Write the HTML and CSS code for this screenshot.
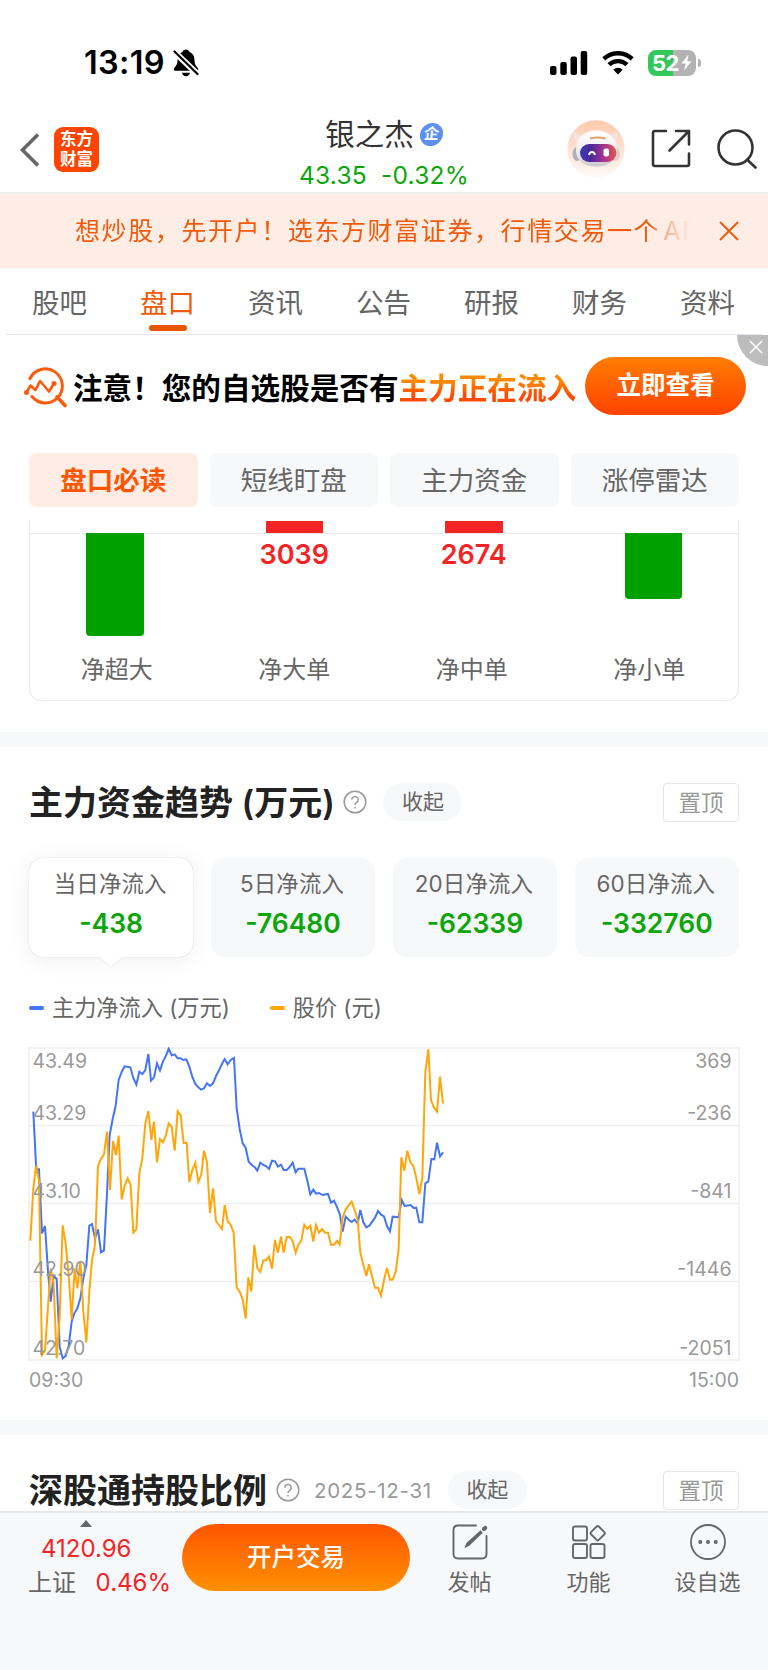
FILE: index.html
```
<!DOCTYPE html>
<html lang="zh-CN">
<head>
  <meta charset="UTF-8" />
  <meta name="viewport" content="width=device-width, initial-scale=1" />
  <title>银之杰</title>
  <link rel="stylesheet" href="styles.css">
</head>
<body>

<div class="status-bar">
  <div class="status-left">
    <span class="clock">13:19</span>
    <svg width="26" height="28" viewBox="0 0 26 28">
      <path d="M13 0.5c-1.8 0-3 1-3.3 2.2C6.600 4 4.800 6.500 4.600 10c-.2 4.500-.8 6-2.600 8-1.500 1.800-1.800 3.700.2 3.700h21.600c2 0 1.700-1.900.2-3.700-1.800-2-2.400-3.500-2.600-8-.2-3.500-2-6-5.100-7.300C16 1.500 14.800.5 13 .5z"/>
      <path d="M9 23.700h8c-.4 2.200-2 3.600-4 3.600s-3.600-1.400-4-3.600z"/>
      <path d="M1 2.500l24 23" stroke="#fff" stroke-width="6"/>
      <path d="M1.500 2.500l23 22.500" stroke="#000" stroke-width="2.200" stroke-linecap="round"/>
    </svg>
  </div>
  <div class="status-right">
    <svg width="38" height="24" viewBox="0 0 38 24">
      <rect x="0" y="15" width="6.500" height="9" rx="2"/>
      <rect x="10.300" y="11" width="6.500" height="13" rx="2"/>
      <rect x="20.500" y="5.500" width="6.500" height="18.500" rx="2"/>
      <rect x="30.700" y="0" width="6.500" height="24" rx="2"/>
    </svg>
    <svg width="32" height="24" viewBox="0 0 32 24" fill="none" stroke="#000" stroke-width="4.400">
      <path d="M1.800 7.900a20.500 20.500 0 0 1 28.400 0"/>
      <path d="M7 13.700a13 13 0 0 1 18 0"/>
      <path d="M16 23.500l-4.700-4.700a6.700 6.700 0 0 1 9.400 0z" fill="#000" stroke="none"/>
    </svg>
    <div class="battery">
      <span>52</span>
      <svg width="11" height="17" viewBox="0 0 11 17"><path d="M7.500.5L.5 9.500h4.200L3.200 16.500l7.300-9.300H6.300z" fill="#fff"/></svg>
    </div>
    <i class="battery-tip"></i>
  </div>
</div>

<header class="header">
  <div class="header-left">
    <svg width="20" height="34" viewBox="0 0 20 34" fill="none" stroke="#666" stroke-width="3.600"><path d="M18 1.500L2.500 17 18 32.500"/></svg>
    <div class="logo"><span>东方</span><span>财富</span></div>
  </div>
  <div class="header-title">
    <div class="stock-name">银之杰<span class="badge">企</span></div>
    <div class="stock-price"><span>43.35</span><span>-0.32%</span></div>
  </div>
  <div class="header-right">
    <svg width="58" height="58" viewBox="0 0 58 58">
      <defs>
        <linearGradient id="halo" x1="0" y1="0" x2="0" y2="1"><stop offset="0" stop-color="#ffc9ae"/><stop offset="1" stop-color="#fffaf7"/></linearGradient>
        <linearGradient id="visor"><stop offset="0" stop-color="#3f3ab5"/><stop offset=".3" stop-color="#4b2a9a"/><stop offset=".65" stop-color="#a8348f"/><stop offset="1" stop-color="#e2564f"/></linearGradient>
        <linearGradient id="shell" x1="0" y1="0" x2="0" y2="1"><stop offset="0" stop-color="#fff"/><stop offset=".7" stop-color="#ece9ea"/><stop offset="1" stop-color="#c9c4c8"/></linearGradient>
      </defs>
      <circle cx="29" cy="29" r="28.700" fill="url(#halo)"/>
      <path d="M7.500 11c-2 4-1 8.500 3 10.500l6-5.500c-4 .5-7.500-1-9-5z" fill="#efe6e4"/>
      <path d="M49 11c2 4 1 8.500-3 10.500L40 16c4 .5 7.500-1 9-5z" fill="#efe6e4"/>
      <ellipse cx="10" cy="34" rx="4.500" ry="7" fill="#aeb0bb"/>
      <ellipse cx="48.500" cy="34" rx="4.500" ry="7" fill="#d9cdd0"/>
      <path d="M29 10.500c-13 0-20 8-20 19.500C9 41 17 46.500 29 46.500S50 41 50 30c0-11.500-8-19.500-21-19.500z" fill="url(#shell)"/>
      <path d="M23 18.500q7.500-2 15.500 0" stroke="#e9a06a" stroke-width="2" fill="none"/>
      <rect x="13" y="24" width="36.500" height="18" rx="9" fill="url(#visor)"/>
      <path d="M22 35c.8-4 5.200-4 6 0" stroke="#fff" stroke-width="2" fill="none"/>
      <rect x="36.500" y="28.500" width="5.500" height="8" rx="2" fill="#fff"/>
    </svg>
    <svg width="40" height="40" viewBox="0 0 40 40" fill="none" stroke="#333" stroke-width="2.600" stroke-linecap="round" stroke-linejoin="round">
      <path d="M15 2H4Q2 2 2 4v31q0 2 2 2h32q2 0 2-2V24.500"/>
      <path d="M25 2h13v13.500M38 2L18.500 21.500"/>
    </svg>
    <svg width="40" height="40" viewBox="0 0 40 40" fill="none" stroke="#333" stroke-width="2.600" stroke-linecap="round">
      <circle cx="18.500" cy="18.500" r="17"/><path d="M30.500 31l8 7.500"/>
    </svg>
  </div>
</header>

<div class="notice">
  <p class="notice-text">想炒股，先开户！选东方财富证券，行情交易一个<span>APP</span></p>
  <svg width="20" height="20" viewBox="0 0 20 20" fill="none" stroke="#f05a0a" stroke-width="1.900"><path d="M1 1l18 18M19 1L1 19"/></svg>
</div>

<nav class="tabs">
  <a>股吧</a>
  <a class="active">盘口</a>
  <a>资讯</a>
  <a>公告</a>
  <a>研报</a>
  <a>财务</a>
  <a>资料</a>
</nav>

<div class="promo">
  <svg width="44" height="42" viewBox="0 0 44 42" fill="none" stroke="#ff5a0c" stroke-width="3" stroke-linecap="round" stroke-linejoin="round">
    <path d="M6 12.500A17 17 0 1 1 8 30.500"/>
    <path d="M33 31l8 8.500" stroke-width="3.600"/>
    <path d="M2.500 26.500L6.500 19.500 11.500 24 16 15 25 25.500 30 17.500" stroke-width="2.600"/>
    <circle cx="2.500" cy="26.500" r="1" /><circle cx="30" cy="17.500" r="1"/>
  </svg>
  <p class="promo-text">注意！您的自选股是否有<em>主力正在流入</em></p>
  <a class="promo-btn">立即查看</a>
  <span class="promo-close">
    <svg width="14" height="14" viewBox="0 0 14 14" stroke="#fff" stroke-width="1.600"><path d="M1 1l12 12M13 1L1 13"/></svg>
  </span>
</div>

<div class="pills">
  <a class="active">盘口必读</a>
  <a>短线盯盘</a>
  <a>主力资金</a>
  <a>涨停雷达</a>
</div>

<section class="flow">
  <div class="flow-top"><i></i><i class="up"></i><i class="up"></i><i></i></div>
  <div class="flow-bars">
    <div><i class="down" style="height: 103px"></i></div>
    <div><b>3039</b></div>
    <div><b>2674</b></div>
    <div><i class="down" style="height: 66px"></i></div>
  </div>
  <div class="flow-labels"><span>净超大</span><span>净大单</span><span>净中单</span><span>净小单</span></div>
</section>

<section class="block trend">
  <div class="block-head">
    <h2>主力资金趋势 (万元)</h2>
    <svg class="help" width="24" height="24" viewBox="0 0 24 24"><circle cx="12" cy="12" r="10.800"/><path d="M8.800 9.700a3.200 3.200 0 1 1 5 2.600c-1.300.9-1.800 1.400-1.800 2.700"/><path d="M12 17v1.500"/></svg>
    <span class="fold">收起</span>
    <span class="pin">置顶</span>
  </div>

  <div class="cards">
    <div class="card active"><span>当日净流入</span><b>-438</b></div>
    <div class="card"><span>5日净流入</span><b>-76480</b></div>
    <div class="card"><span>20日净流入</span><b>-62339</b></div>
    <div class="card"><span>60日净流入</span><b>-332760</b></div>
  </div>

  <div class="legend">
    <span class="blue">主力净流入 (万元)</span>
    <span class="orange">股价 (元)</span>
  </div>

  <svg class="chart" width="712" height="314" viewBox="-1 -1 712 314">
    <g class="grid">
      <path d="M0 0H710V312H0zM0 77.500H710M0 155.500H710M0 233.500H710"/>
    </g>
    <g transform="scale(.33333) translate(-27 -54)">
      <polyline class="line-blue" points="40,245 48,404 50,418 57,418 66,610 75,588 84,725 92,815 101,738 110,747 119,950 128,985 137,978 146,948 155,875 163,850 172,835 181,805 190,745 199,705 208,587 216,582 225,625 234,598 243,667 252,661 261,490 269,315 278,267 287,227 296,150 305,126 314,109 331,112 340,144 349,164 358,125 367,132 376,120 385,72 393,152 402,142 411,100 420,121 429,94 438,77 446,56 455,76 464,73 473,85 482,85 490,90 499,88 508,110 517,141 526,162 535,172 543,179 552,175 561,160 570,168 579,160 588,138 597,121 606,102 614,87 623,103 632,90 642,84 650,235 659,297 668,340 677,353 686,395 695,405 703,410 712,422 721,398 730,405 739,409 747,417 756,392 765,394 774,410 783,404 791,420 800,420 809,411 818,398 827,427 835,416 853,416 862,452 871,493 880,479 888,491 897,489 907,495 924,492 933,518 942,512 951,531 960,555 968,605 977,560 986,569 995,576 1004,569 1013,580 1021,540 1030,577 1039,592 1048,587 1065,563 1074,543 1083,554 1092,559 1101,588 1110,604 1118,560 1136,562 1145,510 1154,528 1172,525 1181,534 1189,533 1198,577 1207,577 1216,460 1225,454 1234,387 1243,388 1251,338 1260,379 1269,367"/>
      <polyline class="line-orange" points="31,632 40,475 48,408 57,452 66,975 75,962 84,830 92,715 101,760 110,985 119,860 128,586 137,640 146,735 155,868 164,715 172,775 181,693 190,845 199,937 208,785 216,690 225,645 234,408 243,386 252,374 261,305 270,480 279,333 288,375 296,317 305,508 314,467 323,445 332,465 340,608 349,598 358,430 367,385 376,280 385,243 394,330 402,275 411,397 420,327 429,337 438,315 446,280 455,290 464,362 473,244 482,256 491,339 500,339 508,456 517,420 526,398 535,456 544,433 552,362 561,397 570,549 579,475 588,573 597,585 606,597 614,525 623,573 632,585 641,608 650,773 659,785 668,808 677,866 685,742 694,785 703,645 712,714 721,726 730,691 739,691 747,679 756,716 765,630 774,668 783,620 791,668 800,621 809,621 818,633 827,668 835,644 844,632 853,584 862,597 871,587 880,635 888,585 897,608 906,597 915,608 924,608 933,644 942,644 951,633 959,644 968,563 977,538 995,515 1004,540 1013,570 1021,668 1030,704 1039,738 1047,703 1056,739 1065,773 1074,773 1083,797 1092,750 1101,714 1110,749 1118,749 1127,726 1136,658 1144,382 1153,422 1162,362 1171,397 1180,408 1189,444 1198,492 1207,444 1216,125 1225,58 1233,210 1242,233 1251,245 1260,140 1269,221"/>
    </g>
    <g class="axis">
      <text x="3.500" y="19.500">43.49</text><text x="3.500" y="71.500">43.29</text><text x="3.500" y="149.500">43.10</text><text x="3.500" y="228">42.90</text><text x="3.500" y="306.500">42.70</text>
    </g>
    <g class="axis right">
      <text x="702.500" y="19.500">369</text><text x="702.500" y="71.500">-236</text><text x="702.500" y="149.500">-841</text><text x="702.500" y="228">-1446</text><text x="702.500" y="306.500">-2051</text>
    </g>
  </svg>
  <div class="times"><span>09:30</span><span>15:00</span></div>
</section>

<section class="block">
  <div class="block-head">
    <h2>深股通持股比例</h2>
    <svg class="help" width="24" height="24" viewBox="0 0 24 24"><circle cx="12" cy="12" r="10.800"/><path d="M8.800 9.700a3.200 3.200 0 1 1 5 2.600c-1.300.9-1.800 1.400-1.800 2.700"/><path d="M12 17v1.500"/></svg>
    <time>2025-12-31</time>
    <span class="fold">收起</span>
    <span class="pin">置顶</span>
  </div>
</section>

<footer class="bottom-bar">
  <div class="index">
    <i class="caret"></i>
    <div class="index-value">4120.96</div>
    <div class="index-row"><span>上证</span><b>0.46%</b></div>
  </div>
  <a class="trade-btn">开户交易</a>
  <div class="actions">
    <a>
      <svg width="36" height="36" viewBox="0 0 36 36" fill="none" stroke="#666" stroke-width="1.900" stroke-linecap="round">
        <path d="M24 1.500H6Q1.500 1.500 1.500 6v24q0 4.500 4.500 4.500h24q4.500 0 4.500-4.500V12"/>
        <path d="M12.500 24l1.800-5L28.500 6.200l2.300 2.500L17 22z" fill="#666" stroke="none"/>
        <path d="M32 5l1.200-1.200" stroke-width="4"/>
      </svg>
      <span>发帖</span>
    </a>
    <a>
      <svg width="36" height="36" viewBox="0 0 36 36" fill="none" stroke="#666" stroke-width="1.900" stroke-linejoin="round">
        <rect x="2" y="2.500" width="14" height="14" rx="2"/><rect x="2" y="20" width="14" height="14" rx="2"/><rect x="19.500" y="20" width="14" height="14" rx="2"/>
        <rect x="21.200" y="3.700" width="11" height="11" rx="1.500" transform="rotate(45 26.700 9.200)"/>
      </svg>
      <span>功能</span>
    </a>
    <a>
      <svg width="36" height="36" viewBox="0 0 36 36" fill="none" stroke="#666" stroke-width="1.800">
        <circle cx="18" cy="18" r="17"/>
        <g fill="#666" stroke="none"><circle cx="10.300" cy="18" r="2"/><circle cx="18" cy="18" r="2"/><circle cx="25.700" cy="18" r="2"/></g>
      </svg>
      <span>设自选</span>
    </a>
  </div>
</footer>

</body>
</html>
```

FILE: styles.css
```
* { box-sizing: border-box; }
body {
  margin: 0; width: 768px; height: 1670px; overflow: hidden;
  display: flex; flex-direction: column;
  background: #fff; color: #666;
  font-family: Inter, "Noto Sans CJK SC", sans-serif;
}
body > * { flex-shrink: 0; }
p, h2 { margin: 0; }
svg { display: block; flex-shrink: 0; }
i, em { font-style: normal; }

/* status bar */
.status-bar {
  height: 100px; padding: 25px 67px 0 84px;
  display: flex; justify-content: space-between; align-items: center;
}
.status-left { display: flex; align-items: center; gap: 8px; }
.clock { color: #000; font-size: 32.500px; font-weight: 600; letter-spacing: 0.3px; line-height: 36px; }
.status-right { display: flex; align-items: center; }
.status-right > svg { margin-right: 14px; }
.battery {
  width: 48px; height: 26px; border-radius: 8px;
  background: linear-gradient(90deg, #34c759 52%, #b3b3b3 52%);
  display: flex; align-items: center; justify-content: center;
}
.battery span { color: #fff; font-size: 22px; font-weight: 700; line-height: 26px; letter-spacing: -0.5px; }
.battery svg { margin-left: 2px; }
.battery-tip { width: 3px; height: 8px; margin-left: 2px; border-radius: 0 4px 4px 0; background: #b3b3b3; }

/* header */
.header {
  height: 94px; padding: 5px 11px 0 20px; border-bottom: 2px solid #ececee;
  display: grid; grid-template-columns: 1fr auto 1fr; align-items: start;
}
.header-left { display: flex; align-items: center; gap: 14px; padding-top: 22px; }
.logo {
  width: 45px; height: 45px; border-radius: 9px; background: #ff4400; color: #fff;
  font-size: 16.500px; font-weight: 700; line-height: 19.500px;
  display: flex; flex-direction: column; align-items: center; padding-top: 3px;
}
.header-title { padding-top: 9px; margin-right: 9px; }
.stock-name {
  display: flex; align-items: center; justify-content: center; gap: 6px;
  color: #333; font-size: 29.500px; line-height: 40px;
}
.badge {
  width: 23px; height: 23px; border-radius: 50%; background: #5f8ff0; color: #fff;
  font-size: 15px; font-weight: 700; line-height: 22px; text-align: center; transform: skewX(-6deg);
}
.stock-price {
  display: flex; gap: 14px; color: #0aa60a;
  font-size: 24.500px; letter-spacing: .25px; line-height: 30px; margin-top: 6px;
}
.header-right { display: flex; align-items: center; justify-content: flex-end; gap: 26px; padding-top: 15px; }

/* open account notice */
.notice {
  height: 74px; padding: 0 29px 0 75px; background: #feede5; color: #f05a0a;
  display: flex; align-items: center; justify-content: space-between;
}
.notice-text {
  width: 616px; overflow: hidden; white-space: nowrap;
  font-size: 25px; letter-spacing: 1.600px; line-height: 40px;
  -webkit-mask-image: linear-gradient(90deg, #000 575px, rgba(0,0,0,.5) 584px, transparent 616px);
  mask-image: linear-gradient(90deg, #000 575px, rgba(0,0,0,.5) 584px, transparent 616px);
}
.notice-text span { margin-left: 3px; }

/* tabs */
.tabs { height: 67px; margin: 0 6px; border-bottom: 1px solid #e4e4ec; display: grid; grid-template-columns: repeat(7, 1fr); }
.tabs a {
  display: flex; flex-direction: column; align-items: center;
  padding-top: 14px; margin-left: -1px; font-size: 27.500px; line-height: 42px;
}
.tabs .active { color: #f05a0a; }
.tabs .active::after { content: ""; width: 38px; height: 6px; border-radius: 3px; background: #ea5504; margin-top: 1px; }

/* promo strip */
.promo { position: relative; height: 118px; padding: 22px 22px 0 24px; display: flex; align-items: flex-start; }
.promo > svg { margin-top: 9px; }
.promo-text {
  margin-left: 5px; color: #000; white-space: nowrap;
  font-size: 29.600px; font-weight: 700; line-height: 62px;
}
.promo em { background: linear-gradient(#ff8a00 30%, #ff4a00 70%); -webkit-background-clip: text; background-clip: text; color: transparent; }
.promo-btn {
  width: 161px; height: 58px; margin-left: auto; border-radius: 29px;
  background: linear-gradient(#ff7d00, #ff4200); color: #fff;
  font-size: 24.500px; font-weight: 700; line-height: 57px; text-align: center;
}
.promo-close {
  position: absolute; top: 0; right: 0; width: 31px; height: 31px;
  background: #bdbdbd; border-bottom-left-radius: 31px;
  display: flex; justify-content: flex-end; padding: 5px 5px 0 0;
}

/* second level tabs */
.pills { height: 53px; padding: 0 29px; display: grid; grid-template-columns: repeat(4, 1fr); gap: 12px; }
.pills a { border-radius: 7px; background: #f7f8fa; font-size: 26.500px; line-height: 54px; text-align: center; }
.pills .active { background: #ffede5; color: #ff5500; font-weight: 700; }

/* order size bars */
.flow {
  height: 180px; margin: 15px 29px 31px; border: 1px solid #ebebed; border-top: 0;
  border-radius: 0 0 12px 12px; display: flex; flex-direction: column;
}
.flow-top, .flow-bars { display: grid; grid-template-columns: repeat(4, 179.500px); justify-content: center; }
.flow-top { height: 12px; justify-items: center; margin: 0 -5px; }
.flow-top .up { width: 57.500px; background: #f52424; }
.flow-bars { height: 117px; margin: 0 -5px; text-align: center; }
.flow-bars::before { content: ""; grid-column: 1 / -1; height: 1px; margin: 0 5px -1px; background: #ebebed; }
.flow-bars { grid-template-rows: 1px 1fr; }
.flow-bars > div { margin-top: -1px; }
.down { display: block; width: 57.500px; margin: 0 auto; border-radius: 0 0 4px 4px; background: #00a000; }
.flow-bars b { display: block; padding-top: 6px; color: #f52424; font-size: 27px; font-weight: 600; line-height: 32px; }
.flow-labels { display: grid; grid-template-columns: repeat(4, 1fr); margin-left: -2px; text-align: center; font-size: 24px; line-height: 40px; }

/* content blocks */
.block { border-top: 15px solid #f7f8fa; padding: 0 29px; }
.trend { height: 688px; }
.block-head { display: flex; align-items: center; height: 40px; margin-top: 35px; }
.block-head h2 { margin-top: 2px; color: #222; font-size: 34px; font-weight: 600; line-height: 40px; white-space: nowrap; }
.help { margin-left: 8.500px; fill: none; stroke: #999; stroke-width: 1.500; }
.block-head time { margin-left: 14.500px; color: #999; font-size: 20.500px; letter-spacing: .7px; }
.fold { width: 79px; height: 38px; margin-left: 16px; border-radius: 19px; background: #f7f8fa; font-size: 21px; line-height: 38px; text-align: center; }
.pin { width: 76px; height: 39px; margin-left: auto; border: 1px solid #e6e6e8; border-radius: 4px; color: #999; font-size: 22.500px; line-height: 38px; text-align: center; }

.cards { display: grid; grid-template-columns: repeat(4, 1fr); gap: 17.500px; margin-top: 36px; }
.card {
  position: relative; height: 99px; padding-top: 11px; border-radius: 14px; background: #f7f8fa;
  display: flex; flex-direction: column; align-items: center;
}
.card span { margin-left: -2px; font-size: 22.400px; letter-spacing: .2px; line-height: 30px; white-space: nowrap; }
.card b { margin-top: 7px; color: #0aa60a; font-size: 26.500px; font-weight: 600; line-height: 34px; }
.card.active { background: #fff; box-shadow: 0 3px 24px rgba(0, 0, 0, .07), 0 0 1px rgba(0, 0, 0, .25); }
.card.active::after {
  content: ""; position: absolute; left: 50%; bottom: -10px; margin-left: -11px;
  border: 11px solid transparent; border-top: 10px solid #fff; border-bottom: 0;
  filter: drop-shadow(0 1px 0 rgba(0, 0, 0, .06));
}

.legend { display: flex; gap: 40px; margin-top: 36px; font-size: 22.200px; line-height: 30px; }
.legend span { display: flex; align-items: center; white-space: pre; }
.legend span::before { content: ""; width: 15px; height: 4px; margin-right: 8px; border-radius: 2px; background: currentColor; }
.legend .blue::before { background: #4475f5; }
.legend .orange::before { background: #ffa60a; }

.chart { margin: 24px 0 0 -1px; }
.grid { fill: none; stroke: #efeff1; stroke-width: 1.500; }
.line-blue, .line-orange { fill: none; stroke-width: 6; stroke-linejoin: miter; }
.line-blue { stroke: #4475f5; }
.line-orange { stroke: #ffa60a; }
.axis { fill: #999; font-size: 19.500px; }
.right { text-anchor: end; }
.times { display: flex; justify-content: space-between; margin-top: 6px; color: #999; font-size: 19.500px; line-height: 26px; }

/* bottom bar */
.bottom-bar {
  position: fixed; left: 0; right: 0; bottom: 0; height: 159px; padding-right: 1px;
  border-top: 2px solid #e7e7ea; background: #f7f8fa; display: flex; align-items: flex-start;
}
.index { width: 182px; padding-left: 29px; color: #f52424; font-size: 24px; }
.caret { display: block; width: 0; margin: 7px 0 0 51px; border: 6.500px solid transparent; border-top: 0; border-bottom: 7px solid #666; }
.index-value { margin: 6px 0 0 12px; line-height: 32px; }
.index-row { display: flex; justify-content: space-between; padding-right: 11px; line-height: 35px; }
.index-row span { margin-left: -1px; color: #666; }
.index-row b { font-weight: 400; }
.trade-btn {
  width: 228px; height: 67px; margin-top: 11px; border-radius: 33.500px;
  background: linear-gradient(#ff5500, #ff9000); color: #fff;
  font-size: 24.500px; font-weight: 500; line-height: 66px; text-align: center;
}
.actions { display: grid; grid-template-columns: repeat(3, 119px); }
.actions a { display: flex; flex-direction: column; align-items: center; padding-top: 11px; font-size: 22px; line-height: 30px; }
.actions span { margin-top: 7px; }
```
